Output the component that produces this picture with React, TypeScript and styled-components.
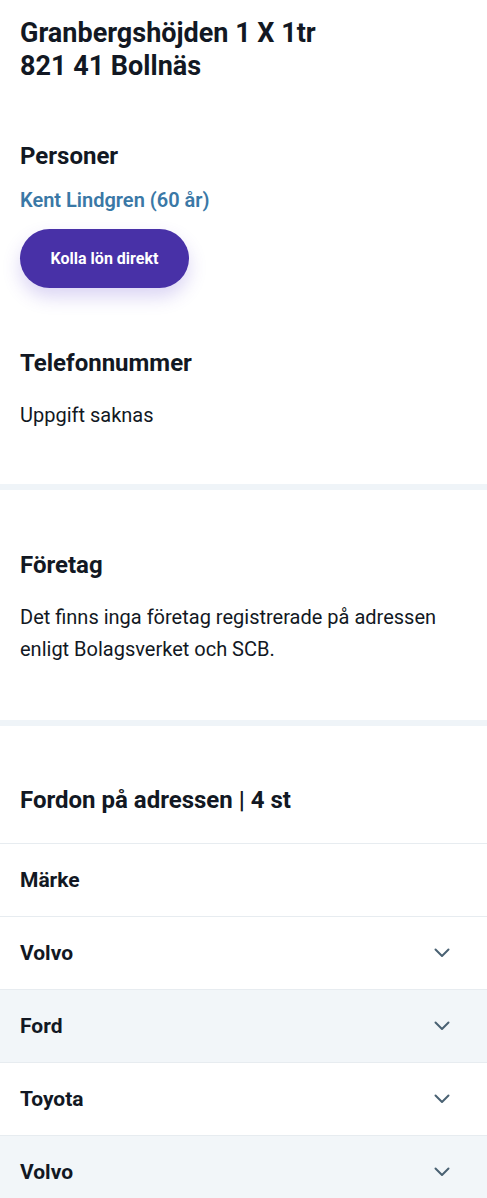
import React from 'react';
import styled, { createGlobalStyle } from 'styled-components';

const GlobalStyle = createGlobalStyle`
  html, body {
    margin: 0;
    padding: 0;
    background: #ffffff;
  }
  body {
    font-family: Roboto, "Noto Sans", sans-serif;
    color: #121823;
    -webkit-font-smoothing: antialiased;
  }
`;

const Page = styled.div`
  width: 487px;
  overflow: hidden;
`;

const Section = styled.section<{ $top: number; $bottom: number }>`
  padding: ${p => p.$top}px 20px ${p => p.$bottom}px;
`;

const Divider = styled.div`
  height: 6px;
  background: #eff4f8;
`;

const Address = styled.h1`
  margin: 0;
  font-size: 27px;
  line-height: 33px;
  font-weight: 700;
`;

const Heading = styled.h2<{ $gap?: number }>`
  margin: ${p => p.$gap ?? 0}px 0 0;
  font-size: 24px;
  line-height: 30px;
  font-weight: 700;
`;

const Text = styled.p`
  margin: 21px 0 0;
  font-size: 20px;
  line-height: 32px;
  font-weight: 400;
`;

const PersonLink = styled.a`
  display: block;
  margin-top: 17px;
  font-size: 20px;
  line-height: 24px;
  font-weight: 600;
  color: #3a78a6;
  text-decoration: none;
`;

const PrimaryButton = styled.button`
  display: block;
  margin-top: 17px;
  width: 169px;
  height: 59px;
  border: none;
  border-radius: 30px;
  background: #4831a7;
  color: #ffffff;
  font-family: Roboto, sans-serif;
  font-size: 16px;
  font-weight: 700;
  box-shadow: 0 9px 18px rgba(90, 62, 205, 0.22);
  cursor: pointer;
`;

const VehicleHead = styled.div`
  padding: 59px 20px 28px;
`;

const Row = styled.div<{ $shade?: boolean }>`
  display: flex;
  align-items: center;
  justify-content: space-between;
  height: 72px;
  padding: 0 37px 0 20px;
  border-top: 1px solid #e7ecf0;
  background: ${p => (p.$shade ? '#f2f6f9' : '#ffffff')};
  font-size: 21px;
  font-weight: 700;
`;

const Chevron = () => (
  <svg width="16" height="10" viewBox="0 0 16 10" fill="none">
    <path d="M1.5 1.5L8 8L14.5 1.5" stroke="#4a6273" strokeWidth="2" strokeLinecap="round" strokeLinejoin="round" />
  </svg>
);

const vehicles = ['Volvo', 'Ford', 'Toyota', 'Volvo'];

export default function App() {
  return (
    <Page>
      <GlobalStyle />
      <Section $top={17} $bottom={53}>
        <Address>
          Granbergshöjden 1 X 1tr
          <br />
          821 41 Bollnäs
        </Address>
        <Heading $gap={58}>Personer</Heading>
        <PersonLink href="#">Kent Lindgren (60 år)</PersonLink>
        <PrimaryButton>Kolla lön direkt</PrimaryButton>
        <Heading $gap={60}>Telefonnummer</Heading>
        <Text>Uppgift saknas</Text>
      </Section>
      <Divider />
      <Section $top={60} $bottom={55}>
        <Heading>Företag</Heading>
        <Text>Det finns inga företag registrerade på adressen enligt Bolagsverket och SCB.</Text>
      </Section>
      <Divider />
      <VehicleHead>
        <Heading>Fordon på adressen | 4 st</Heading>
      </VehicleHead>
      <Row>Märke</Row>
      {vehicles.map((v, i) => (
        <Row key={i} $shade={i % 2 === 1}>
          {v}
          <Chevron />
        </Row>
      ))}
    </Page>
  );
}
